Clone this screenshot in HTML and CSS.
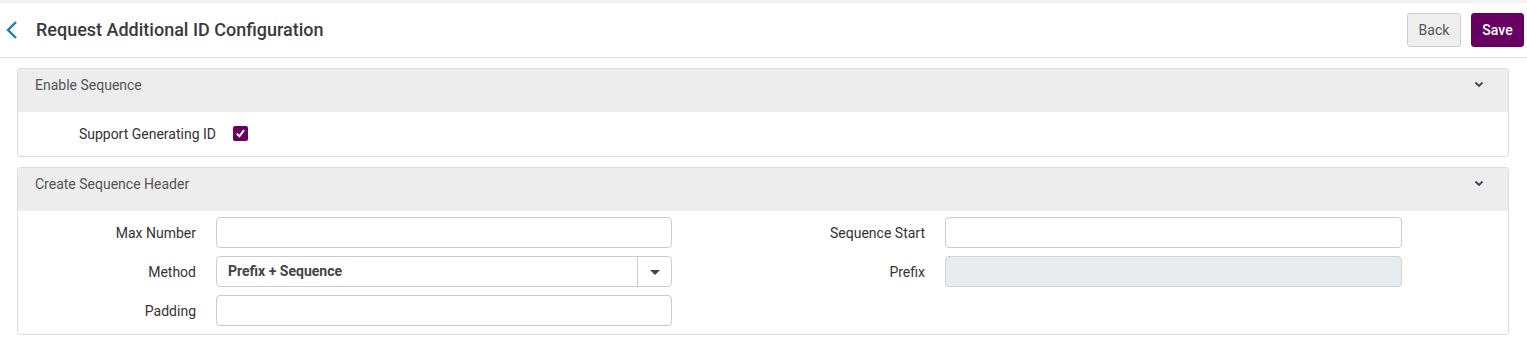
FILE: index.html
```html
<!DOCTYPE html>
<html lang="en">
<head>
  <meta charset="UTF-8">
  <title>Request Additional ID Configuration</title>
  <link rel="stylesheet" href="styles.css">
</head>
<body>

<div class="top-strip"></div>

<div class="page-header">
  <a class="back-link" href="#">
    <svg width="14" height="20" viewBox="0 0 14 20"><path d="M11 2 L3 10 L11 18" fill="none" stroke="#1a7bbf" stroke-width="2.4"/></svg>
  </a>
  <h1 class="page-title">Request Additional ID Configuration</h1>
  <div class="header-actions">
    <button class="btn btn-back">Back</button>
    <button class="btn btn-save">Save</button>
  </div>
</div>

<div class="content">
  <div class="panel">
    <div class="panel-heading">
      <span>Enable Sequence</span>
      <svg class="chev" width="10" height="7" viewBox="0 0 10 7"><path d="M1.5 1.5 L5 5 L8.5 1.5" fill="none" stroke="#3c4450" stroke-width="1.8"/></svg>
    </div>
    <div class="panel-body check-row">
      <label class="check-label" for="gen">Support Generating ID</label>
      <span class="checkbox" id="gen">
        <svg width="15" height="15" viewBox="0 0 15 15"><path d="M3.8 7.6 L6.4 10.3 L11 4.2" fill="none" stroke="#fff" stroke-width="2"/></svg>
      </span>
    </div>
  </div>

  <div class="panel">
    <div class="panel-heading">
      <span>Create Sequence Header</span>
      <svg class="chev" width="10" height="7" viewBox="0 0 10 7"><path d="M1.5 1.5 L5 5 L8.5 1.5" fill="none" stroke="#3c4450" stroke-width="1.8"/></svg>
    </div>
    <div class="panel-body form-grid">
      <label class="field-label">Max Number</label>
      <input class="field" type="text">
      <label class="field-label">Sequence Start</label>
      <input class="field" type="text">

      <label class="field-label">Method</label>
      <div class="select">
        <span class="select-value">Prefix + Sequence</span>
        <span class="select-btn"><span class="caret"></span></span>
      </div>
      <label class="field-label">Prefix</label>
      <input class="field" type="text" disabled>

      <label class="field-label">Padding</label>
      <input class="field" type="text">
    </div>
  </div>
</div>

</body>
</html>
```

FILE: styles.css
```css
body {
  margin: 0;
  font-family: Roboto, "Liberation Sans", sans-serif;
  color: #333;
  background: #fff;
}

.top-strip {
  height: 3px;
  background: #f2f2f2;
}

.page-header {
  display: flex;
  align-items: center;
  height: 54px;
  border-bottom: 1px solid #e2e2e2;
  padding: 0 3px 0 5px;
}

.back-link {
  display: flex;
  width: 31px;
}

.page-title {
  margin: 0 0 2px;
  font-size: 18px;
  font-weight: 500;
  color: #3a3a3a;
  flex: 1;
}

.header-actions {
  display: flex;
  gap: 10px;
}

.btn {
  font-family: Roboto, "Liberation Sans", sans-serif;
  font-size: 14px;
  height: 34px;
  padding: 0 10px;
  border-radius: 3px;
  cursor: pointer;
}

.btn-back {
  background: #eeeeee;
  border: 1px solid #ccc;
  color: #555;
  width: 54px;
}

.btn-save {
  background: #680062;
  border: 1px solid #680062;
  color: #fff;
  font-weight: 500;
  width: 53px;
}

.content {
  padding: 10px 18px 0 17px;
  display: flex;
  flex-direction: column;
  gap: 10px;
}

.panel {
  border: 1px solid #dcdcdc;
  border-radius: 3px;
}

.panel-heading {
  display: flex;
  justify-content: space-between;
  align-items: center;
  box-sizing: border-box;
  height: 43px;
  background: #ededed;
  padding: 0 24px 12px 17px;
  font-size: 14px;
  color: #555;
}

.check-row {
  display: flex;
  align-items: center;
  height: 44px;
}

.check-label {
  width: 198px;
  text-align: right;
  font-size: 14px;
}

.checkbox {
  display: flex;
  width: 15px;
  height: 15px;
  margin-left: 17px;
  background: #680062;
  border-radius: 2px;
  margin-top: -1px;
}

.form-grid {
  display: grid;
  grid-template-columns: 198px 456px 273px 457px;
  row-gap: 8px;
  padding: 6px 0 8px;
  align-items: center;
}

.field-label {
  text-align: right;
  padding-right: 20px;
  font-size: 14px;
  color: #333;
}

.field {
  height: 31px;
  box-sizing: border-box;
  border: 1px solid #ccc;
  border-radius: 4px;
  font-size: 14px;
  margin: 0;
}

.field:disabled {
  background: #e9ecef;
  border-color: #ced4da;
}

.select {
  display: flex;
  height: 31px;
  box-sizing: border-box;
  border: 1px solid #ccc;
  border-radius: 4px;
}

.select-value {
  flex: 1;
  padding-left: 11px;
  font-size: 14px;
  font-weight: 700;
  color: #444;
  line-height: 29px;
}

.select-btn {
  width: 33px;
  border-left: 1px solid #ccc;
  display: flex;
  align-items: center;
  justify-content: center;
}

.caret {
  width: 0;
  height: 0;
  border-left: 5px solid transparent;
  border-right: 5px solid transparent;
  border-top: 5px solid #444;
  margin-top: 1px;
}
```
